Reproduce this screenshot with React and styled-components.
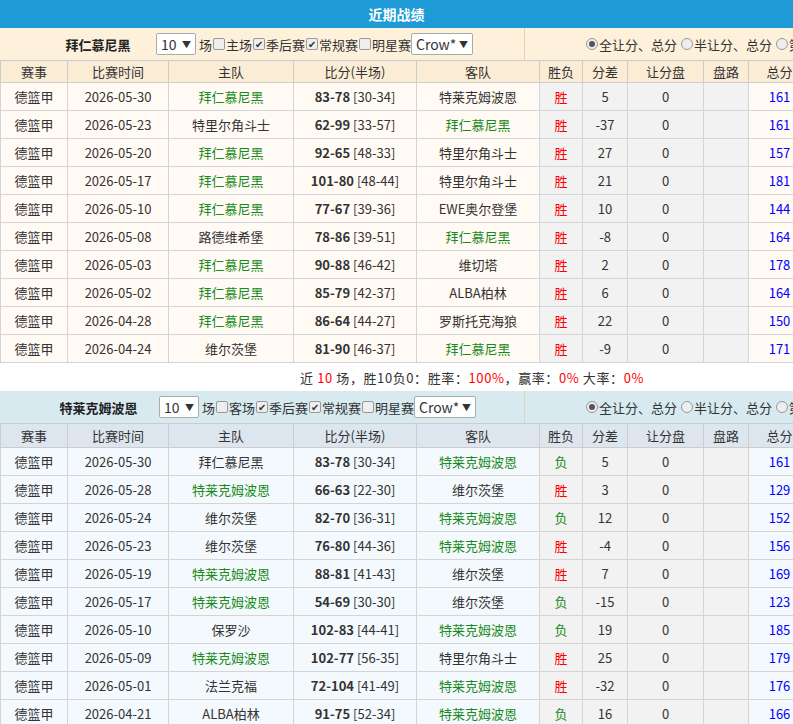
import React from "react";
import styled, { createGlobalStyle } from "styled-components";

const G = createGlobalStyle`
  body{margin:0;font-family:"Noto Sans CJK SC","Microsoft YaHei",sans-serif;font-size:13px;color:#333;background:#fff;}
  *{box-sizing:border-box;}
`;
const Wrap = styled.div`width:793px;overflow:hidden;`;
const Title = styled.div`height:28px;background:#1e9ad7;color:#fff;font-weight:bold;font-size:14px;display:flex;align-items:center;justify-content:center;`;
const Filter = styled.div`height:${p=>p.h}px;display:flex;background:${p=>p.bg};white-space:nowrap;font-size:13px;`;
const FLeft = styled.div`width:525px;flex:none;display:flex;align-items:center;border-right:1px solid #e5d3b3;`;
const TeamName = styled.div`width:${p=>p.w}px;padding-left:${p=>p.pl}px;text-align:center;font-weight:bold;color:#222;`;
const Sel = styled.span`display:inline-flex;align-items:center;justify-content:space-between;height:22px;border:1px solid #aaa;border-radius:2px;background:#fff;padding:0 4px;font-size:14px;width:${p=>p.w}px;&::after{content:"▼";font-size:9px;}`;
const Chk = styled.span`display:inline-flex;align-items:center;justify-content:center;width:12px;height:12px;border:1px solid #999;border-radius:2px;background:#eee;font-size:10px;line-height:1;margin:0 1px;`;
const FRight = styled.div`flex:1;display:flex;align-items:center;padding-left:60px;overflow:hidden;`;
const Radio = styled.span`display:inline-flex;flex:none;align-items:center;justify-content:center;width:12px;height:12px;border:1px solid #999;border-radius:50%;background:#eee;margin:0 1px;&::after{content:"";width:6px;height:6px;border-radius:50%;background:${p=>p.on?"#555":"transparent"};}`;
const Table = styled.table`border-collapse:collapse;table-layout:fixed;width:810px;`;
const Th = styled.th`height:${p=>p.h}px;font-weight:normal;background:${p=>p.bg};border:1px solid #ccc;color:#333;`;
const Td = styled.td`height:28px;border:1px solid #d4d4d4;text-align:center;background:${p=>p.gray?"#f2f2f2":p.bg};color:${p=>p.c||"#333"};`;
const Summary = styled.div`height:28px;display:flex;align-items:center;padding-left:300px;font-size:13px;letter-spacing:0.6px;white-space:pre;`;
const R = styled.span`color:#f00;`;

const widths=[67,101,125,123,123,43,45,76,45,62];
const heads=["赛事","比赛时间","主队","比分(半场)","客队","胜负","分差","让分盘","盘路","总分"];
const B="拜仁慕尼黑",T="特莱克姆波恩";
const d1=[["2026-05-30",B,"83-78","30-34",T,"5","161"],["2026-05-23","特里尔角斗士","62-99","33-57",B,"-37","161"],["2026-05-20",B,"92-65","48-33","特里尔角斗士","27","157"],["2026-05-17",B,"101-80","48-44","特里尔角斗士","21","181"],["2026-05-10",B,"77-67","39-36","EWE奥尔登堡","10","144"],["2026-05-08","路德维希堡","78-86","39-51",B,"-8","164"],["2026-05-03",B,"90-88","46-42","维切塔","2","178"],["2026-05-02",B,"85-79","42-37","ALBA柏林","6","164"],["2026-04-28",B,"86-64","44-27","罗斯托克海狼","22","150"],["2026-04-24","维尔茨堡","81-90","46-37",B,"-9","171"]];
const d2=[["2026-05-30",B,"83-78","30-34",T,"5","161","负"],["2026-05-28",T,"66-63","22-30","维尔茨堡","3","129","胜"],["2026-05-24","维尔茨堡","82-70","36-31",T,"12","152","负"],["2026-05-23","维尔茨堡","76-80","44-36",T,"-4","156","胜"],["2026-05-19",T,"88-81","41-43","维尔茨堡","7","169","胜"],["2026-05-17",T,"54-69","30-30","维尔茨堡","-15","123","负"],["2026-05-10","保罗沙","102-83","44-41",T,"19","185","负"],["2026-05-09",T,"102-77","56-35","特里尔角斗士","25","179","胜"],["2026-05-01","法兰克福","72-104","41-49",T,"-32","176","胜"],["2026-04-21","ALBA柏林","91-75","52-34",T,"16","166","负"]];

function Block({name,nameW,pl,rows,team,filterBg,headBg,rowBg,headH,venue,filterH}){
  return <>
    <Filter bg={filterBg} h={filterH}>
      <FLeft>
        <TeamName w={nameW} pl={pl}>{name}</TeamName>
        <Sel w={40}>10</Sel>&nbsp;场<Chk/>{venue}<Chk>✔</Chk>季后赛<Chk>✔</Chk>常规赛<Chk/>明星赛<Sel w={62}>Crow*</Sel>
      </FLeft>
      <FRight><Radio on/>全让分、总分&nbsp;<Radio/>半让分、总分&nbsp;<Radio/>第一节</FRight>
    </Filter>
    <Table>
      <colgroup>{widths.map((w,i)=><col key={i} style={{width:w}}/>)}</colgroup>
      <thead><tr>{heads.map(h=><Th key={h} bg={headBg} h={headH}>{h}</Th>)}</tr></thead>
      <tbody>{rows.map((r,i)=>{
        const res=r[7]||"胜";
        return <tr key={i}>
          <Td bg={rowBg}>德篮甲</Td><Td bg={rowBg}>{r[0]}</Td>
          <Td bg={rowBg} c={r[1]===team?"#1a8a1a":undefined}>{r[1]}</Td>
          <Td bg={rowBg}><b>{r[2]}</b> [{r[3]}]</Td>
          <Td bg={rowBg} c={r[4]===team?"#1a8a1a":undefined}>{r[4]}</Td>
          <Td gray c={res==="胜"?"#f00":"#1a8a1a"}>{res}</Td>
          <Td gray>{r[5]}</Td><Td gray>0</Td><Td gray></Td>
          <Td bg={rowBg} c="#00f">{r[6]}</Td>
        </tr>;})}</tbody>
    </Table>
  </>;
}

export default function App(){
  return <Wrap><G/>
    <Title>近期战绩</Title>
    <Block name={B} nameW={156} pl={40} rows={d1} team={B} filterBg="#fdf1dc" headBg="#fbecd6" rowBg="#fffaf4" headH={22} venue="主场" filterH={32}/>
    <Summary>近 <R>10</R> 场，胜10负0：胜率：<R>100%</R>，赢率：<R>0%</R> 大率：<R>0%</R></Summary>
    <Block name={T} nameW={159} pl={38} rows={d2} team={T} filterBg="#d7eaf0" headBg="#dde6ee" rowBg="#f3f9fc" headH={24} venue="客场" filterH={32}/>
  </Wrap>;
}
